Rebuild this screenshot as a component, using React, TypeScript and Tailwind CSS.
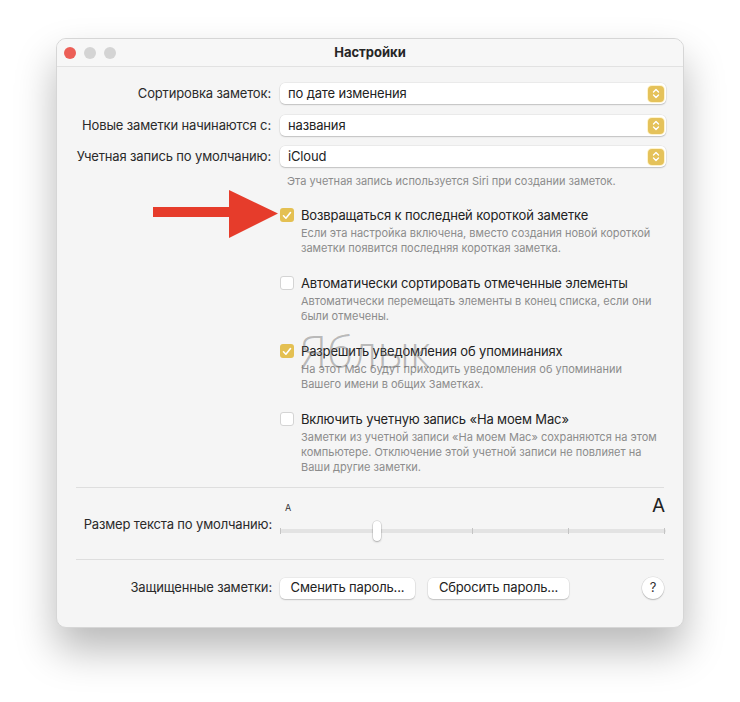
const font = { fontFamily: 'Inter, "Noto Sans", sans-serif' }

function Stepper() {
  return (
    <div className="flex h-[16px] w-[16px] items-center justify-center rounded-[4px] bg-[#e5c25a] shadow-[0_0_0_1px_rgba(255,240,190,0.8)]">
      <svg width="8" height="11" viewBox="0 0 8 11" fill="none">
        <path d="M1.5 4 L4 1.5 L6.5 4" stroke="white" strokeWidth="1.4" strokeLinecap="round" strokeLinejoin="round" />
        <path d="M1.5 7 L4 9.5 L6.5 7" stroke="white" strokeWidth="1.4" strokeLinecap="round" strokeLinejoin="round" />
      </svg>
    </div>
  )
}

function Popup({ value }: { value: string }) {
  return (
    <div className="flex h-[21px] w-[386px] items-center justify-between rounded-[5px] bg-white pl-[8px] pr-[2px] text-[13px] tracking-[-0.15px] text-[#222] shadow-[0_0_0_0.5px_rgba(0,0,0,0.08),0_1px_1.5px_rgba(0,0,0,0.18)]">
      <span>{value}</span>
      <Stepper />
    </div>
  )
}

function Row({ label, children, className = '' }: { label: string; children: React.ReactNode; className?: string }) {
  return (
    <div className={`flex items-center ${className}`}>
      <div className="w-[215px] shrink-0 pr-[1px] text-right text-[13px] tracking-[-0.15px] text-[#2a2a2a]">{label}</div>
      <div className="ml-[8px]">{children}</div>
    </div>
  )
}

function Checkbox({ checked }: { checked: boolean }) {
  if (checked)
    return (
      <div className="flex h-[14px] w-[14px] shrink-0 items-center justify-center rounded-[3px] bg-[#e4c052]">
        <svg width="10" height="9" viewBox="0 0 10 9" fill="none">
          <path d="M1.5 4.8 L3.9 7.2 L8.5 1.5" stroke="white" strokeWidth="1.6" strokeLinecap="round" strokeLinejoin="round" />
        </svg>
      </div>
    )
  return <div className="h-[14px] w-[14px] shrink-0 rounded-[3px] border border-[#d4d4d4] bg-white" />
}

function Option({ checked, label, lines, className = '' }: { checked: boolean; label: string; lines: string[]; className?: string }) {
  return (
    <div className={`flex ${className}`}>
      <div className="flex h-[16px] items-center">
        <Checkbox checked={checked} />
      </div>
      <div className="ml-[7px]">
        <div className="text-[13px] leading-[16px] tracking-[-0.15px] text-[#222]">{label}</div>
        <div className="mt-[3px] text-[11px] leading-[15px] text-[#8c8c8c]">
          {lines.map((l) => (
            <div key={l}>{l}</div>
          ))}
        </div>
      </div>
    </div>
  )
}

function Slider() {
  const ticks = [0, 96, 192, 288, 384]
  return (
    <div className="w-[386px]">
      <div className="flex h-[18px] items-end justify-between">
        <span className="mb-[2px] ml-[5px] text-[9px] leading-[10px] text-[#333]">A</span>
        <span className="mr-[1px] text-[19px] leading-[18px] text-[#222]">A</span>
      </div>
      <div className="relative mt-[6px] h-[20px]">
        <div className="absolute left-0 right-0 top-[8px] h-[4px] rounded-full bg-[#e3e3e3]" />
        {ticks.map((t) => (
          <div key={t} className="absolute top-[7px] h-[6px] w-[1px] bg-[#c4c4c4]" style={{ left: t }} />
        ))}
        <div className="absolute left-[93px] top-0 h-[20px] w-[8px] rounded-full bg-white shadow-[0_0_0_0.5px_rgba(0,0,0,0.15),0_1px_2px_rgba(0,0,0,0.25)]" />
      </div>
    </div>
  )
}

function Button({ label, w }: { label: string; w: string }) {
  return (
    <div className={`flex h-[21px] items-center justify-center rounded-[5px] bg-white text-[13px] tracking-[-0.15px] text-[#222] shadow-[0_0_0_0.5px_rgba(0,0,0,0.08),0_1px_1.5px_rgba(0,0,0,0.18)] ${w}`}>
      {label}
    </div>
  )
}

export default function App() {
  return (
    <div className="relative h-[702px] w-[740px] overflow-hidden bg-white" style={font}>
      <div className="ml-[56px] mt-[38px] h-[590px] w-[628px] overflow-hidden rounded-[10px] border border-[#d6d6d6] bg-[#f5f5f5] shadow-[0_22px_40px_rgba(0,0,0,0.28)]">
        <div className="relative flex h-[28px] items-center border-b border-[#e2e2e2] bg-[#f7f7f7]">
          <div className="ml-[7px] flex gap-[8px]">
            <div className="h-[12px] w-[12px] rounded-full bg-[#ec5f57]" />
            <div className="h-[12px] w-[12px] rounded-full bg-[#d4d4d4]" />
            <div className="h-[12px] w-[12px] rounded-full bg-[#d4d4d4]" />
          </div>
          <div className="absolute inset-0 flex items-center justify-center text-[13px] font-bold text-[#262626]">Настройки</div>
        </div>

        <div className="pt-[16px]">
          <Row label="Сортировка заметок:">
            <Popup value="по дате изменения" />
          </Row>
          <Row label="Новые заметки начинаются с:" className="mt-[11px]">
            <Popup value="названия" />
          </Row>
          <Row label="Учетная запись по умолчанию:" className="mt-[10px]">
            <Popup value="iCloud" />
          </Row>

          <div className="ml-[230px] mt-[7px] text-[11px] leading-[15px] text-[#8c8c8c]">
            Эта учетная запись используется Siri при создании заметок.
          </div>

          <div className="ml-[223px]">
            <Option
              className="mt-[18px]"
              checked
              label="Возвращаться к последней короткой заметке"
              lines={['Если эта настройка включена, вместо создания новой короткой', 'заметки появится последняя короткая заметка.']}
            />
            <Option
              className="mt-[19px]"
              checked={false}
              label="Автоматически сортировать отмеченные элементы"
              lines={['Автоматически перемещать элементы в конец списка, если они', 'были отмечены.']}
            />
            <Option
              className="mt-[19px]"
              checked
              label="Разрешить уведомления об упоминаниях"
              lines={['На этот Mac будут приходить уведомления об упоминании', 'Вашего имени в общих Заметках.']}
            />
            <Option
              className="mt-[19px]"
              checked={false}
              label="Включить учетную запись «На моем Mac»"
              lines={[
                'Заметки из учетной записи «На моем Mac» сохраняются на этом',
                'компьютере. Отключение этой учетной записи не повлияет на',
                'Ваши другие заметки.',
              ]}
            />
          </div>

          <div className="ml-[19px] mr-[19px] mt-[12px] h-px bg-[#dedede]" />

          <div className="flex items-start">
            <div className="mt-[28px] w-[215px] shrink-0 text-right text-[13px] leading-[16px] tracking-[-0.15px] text-[#2a2a2a]">
              Размер текста по умолчанию:
            </div>
            <div className="ml-[8px] mt-[9px]">
              <Slider />
            </div>
          </div>

          <div className="ml-[19px] mr-[19px] mt-[18px] h-px bg-[#dedede]" />

          <div className="mt-[17px] flex items-center">
            <div className="w-[215px] shrink-0 text-right text-[13px] tracking-[-0.15px] text-[#2a2a2a]">Защищенные заметки:</div>
            <div className="ml-[8px] flex gap-[13px]">
              <Button label="Сменить пароль..." w="w-[135px]" />
              <Button label="Сбросить пароль..." w="w-[141px]" />
            </div>
            <div className="ml-auto mr-[19px] flex h-[22px] w-[22px] items-center justify-center rounded-full bg-white text-[13px] text-[#333] shadow-[0_0_0_0.5px_rgba(0,0,0,0.1),0_1px_1.5px_rgba(0,0,0,0.2)]">
              ?
            </div>
          </div>
        </div>
      </div>

      <svg className="absolute left-[152px] top-[190px]" width="128" height="50" viewBox="0 0 128 50">
        <polygon points="1,17 77,17 77,0 126,23.5 77,48 77,27 1,27" fill="#e63c2b" />
      </svg>

      <div
        className="pointer-events-none absolute left-[300px] top-[326px] text-[45px] font-light leading-[50px] text-[rgba(110,110,110,0.45)]"
        style={{ fontFamily: '"Open Sans", sans-serif' }}
      >
        Яблык
      </div>
    </div>
  )
}
